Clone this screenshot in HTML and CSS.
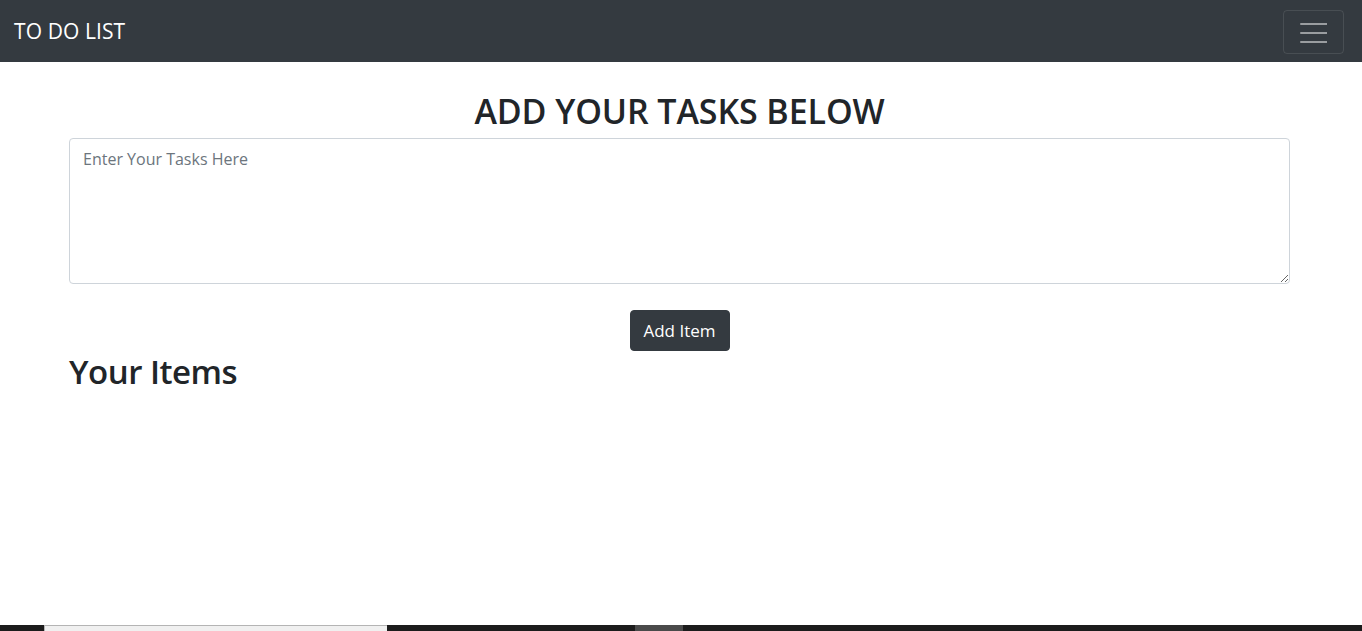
FILE: index.html
```html
<!DOCTYPE html>
<html lang="en">
<head>
<meta charset="utf-8">
<title>To Do List</title>
<link rel="stylesheet" href="styles.css">
</head>
<body>
<nav class="navbar">
  <span class="brand">TO DO LIST</span>
  <button class="toggler" type="button" aria-label="Toggle navigation">
    <svg class="toggler-icon" width="30" height="30" viewBox="0 0 30 30" aria-hidden="true">
      <path d="M4 7h26M4 16h26M4 25h26" stroke="rgba(255,255,255,0.5)" stroke-width="2" stroke-linecap="round"/>
    </svg>
  </button>
</nav>
<main class="container">
  <h1 class="title">ADD YOUR TASKS BELOW</h1>
  <textarea class="task-input" placeholder="Enter Your Tasks Here"></textarea>
  <div class="actions"><button class="btn" type="button">Add Item</button></div>
  <h2 class="items-title">Your Items</h2>
</main>
<div class="taskbar">
  <div class="tb-left"></div>
  <div class="tb-search"></div>
  <div class="tb-gap"></div>
  <div class="tb-active"></div>
  <div class="tb-rest"></div>
</div>
</body>
</html>
```
FILE: styles.css
```css
html, body {
  margin: 0;
  padding: 0;
  height: 100%;
}
body {
  font-family: "Open Sans", "Noto Sans", sans-serif;
  color: #212529;
  background: #fff;
  display: flex;
  flex-direction: column;
  min-height: 100vh;
}
.navbar {
  height: 62px;
  background: #343a40;
  display: flex;
  align-items: center;
  justify-content: space-between;
  padding: 0 18px 0 14px;
  box-sizing: border-box;
  flex-shrink: 0;
}
.brand {
  color: #fff;
  font-size: 21px;
  line-height: 1;
  letter-spacing: 0.1px;
}
.toggler {
  width: 61px;
  height: 44px;
  margin-top: 1px;
  background: transparent;
  border: 1px solid rgba(255,255,255,0.1);
  border-radius: 4px;
  display: flex;
  align-items: center;
  justify-content: center;
  padding: 0;
}
.toggler-icon {
  display: block;
  margin-left: -4px;
}
.container {
  margin: 0 0 0 69px;
  width: 1221px;
  flex: 1;
}
.title {
  margin: 26px 0 0;
  text-align: center;
  font-size: 34px;
  font-weight: 600;
  line-height: 46px;
  letter-spacing: -0.1px;
}
.task-input {
  display: block;
  box-sizing: border-box;
  width: 100%;
  height: 146px;
  margin-top: 4px;
  padding: 8px 13px;
  border: 1px solid #ced4da;
  border-radius: 4px;
  font-family: inherit;
  font-size: 16px;
  line-height: 1.5;
  color: #495057;
  resize: vertical;
}
.task-input::placeholder {
  color: #6c757d;
  opacity: 1;
}
.actions {
  display: flex;
  justify-content: center;
  margin-top: 26px;
}
.btn {
  box-sizing: border-box;
  width: 100px;
  height: 41px;
  background: #343a40;
  color: #fff;
  border: 1px solid #343a40;
  border-radius: 4px;
  font-family: inherit;
  font-size: 17px;
  padding: 0;
}
.items-title {
  margin: -2px 0 0;
  font-size: 33px;
  font-weight: 600;
  line-height: 46px;
  letter-spacing: -0.5px;
}
.taskbar {
  height: 6px;
  display: flex;
  background: #1c1c1c;
  flex-shrink: 0;
}
.tb-left { width: 44px; }
.tb-search {
  width: 343px;
  background: #f0f0f0;
  border-top: 1px solid #b4b4b4;
  border-left: 1px solid #b4b4b4;
  box-sizing: border-box;
}
.tb-gap { width: 248px; }
.tb-active { width: 48px; background: #4a4a4a; }
.tb-rest { flex: 1; }
```
